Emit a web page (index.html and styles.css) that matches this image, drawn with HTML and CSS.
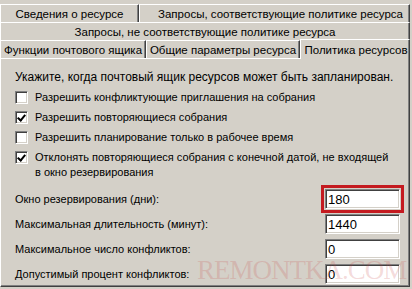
FILE: index.html
```html
<!DOCTYPE html>
<html lang="ru">
<head>
<meta charset="utf-8">
<title>Политика ресурсов</title>
<link rel="stylesheet" href="styles.css">
</head>
<body>
<div class="dialog">
  <div class="tab-remnant"></div>
  <div class="tab-row">
    <div class="tab tab-a">Сведения о ресурсе</div>
    <div class="tab tab-b">Запросы, соответствующие политике ресурса</div>
  </div>
  <div class="tab-row">
    <div class="tab tab-full">Запросы, не соответствующие политике ресурса</div>
  </div>
  <div class="tab-row tab-row-front">
    <div class="tab tab-c">Функции почтового ящика</div>
    <div class="tab tab-d">Общие параметры ресурса</div>
    <div class="tab tab-active">Политика ресурсов</div>
  </div>
  <div class="panel">
    <p class="intro">Укажите, когда почтовый ящик ресурсов может быть запланирован.</p>
    <div class="check-row"><span class="box"></span><span>Разрешить конфликтующие приглашения на собрания</span></div>
    <div class="check-row"><span class="box checked"></span><span>Разрешить повторяющиеся собрания</span></div>
    <div class="check-row"><span class="box"></span><span>Разрешить планирование только в рабочее время</span></div>
    <div class="check-row two-line"><span class="box checked"></span><span class="tight">Отклонять повторяющиеся собрания с конечной датой, не входящей<br>в окно резервирования</span></div>
    <div class="fields">
      <div class="field"><span>Окно резервирования (дни):</span><span class="input highlight">180</span></div>
      <div class="field"><span>Максимальная длительность (минут):</span><span class="input">1440</span></div>
      <div class="field"><span>Максимальное число конфликтов:</span><span class="input">0</span></div>
      <div class="field"><span>Допустимый процент конфликтов:</span><span class="input">0</span></div>
    </div>
    <div class="watermark">REMONTKA.COM</div>
  </div>
</div>
</body>
</html>
```
FILE: styles.css
```css
* { box-sizing: border-box; }
html, body { margin: 0; padding: 0; }
body {
  background: #d4d0c8;
  font-family: "Liberation Sans", Arial, sans-serif;
  font-size: 11px;
  color: #000;
  width: 412px;
  height: 289px;
  overflow: hidden;
}
.dialog {
  width: 410px;
  height: 287px;
  display: flex;
  flex-direction: column;
}
.tab-remnant {
  height: 4px;
}
.tab-row {
  display: flex;
  height: 18px;
}
.tab {
  display: flex;
  align-items: center;
  justify-content: center;
  white-space: nowrap;
  font-size: 11.5px;
  border-top: 1px solid #fff;
  border-left: 1px solid #fff;
  border-right: 1px solid #404040;
  box-shadow: inset -1px 0 0 #808080;
  height: 18px;
}
.tab-a { width: 139px; }
.tab-b { flex: 1; padding-left: 12px; }
.tab-full { flex: 1; }
.tab-c { width: 146px; }
.tab-d { width: 154px; }
.tab-active {
  flex: 1;
  height: 20px;
  margin-top: -1px;
  position: relative;
  z-index: 1;
  background: #d4d0c8;
  padding-left: 2px;
}
.panel {
  flex: 1;
  position: relative;
  border-top: 1px solid #fff;
  border-left: 1px solid #fff;
  border-right: 1px solid #404040;
  border-bottom: 1px solid #404040;
  box-shadow: inset -1px -1px 0 #808080;
  padding: 11px 0 0 14px;
}
.intro {
  margin: 0 0 3px;
  font-size: 12px;
  line-height: 15px;
}
.check-row {
  display: flex;
  align-items: flex-start;
  gap: 7px;
  height: 20px;
  line-height: 15px;
  padding-top: 2px;
}
.check-row.two-line { height: 41px; }
.tight { letter-spacing: 0; white-space: nowrap; }
.box {
  flex: none;
  width: 13px;
  height: 13px;
  margin-top: 1px;
  background: #fff;
  border-top: 1px solid #808080;
  border-left: 1px solid #808080;
  border-right: 1px solid #fff;
  border-bottom: 1px solid #fff;
  box-shadow: inset 1px 1px 0 #404040, inset -1px -1px 0 #d4d0c8;
  position: relative;
}
.box.checked::after {
  content: "";
  position: absolute;
  left: 2px;
  top: 1px;
  width: 3px;
  height: 6px;
  border-right: 2px solid #000;
  border-bottom: 2px solid #000;
  transform: translate(1px, 0) rotate(40deg);
}
.fields {
  display: flex;
  flex-direction: column;
  gap: 5px;
}
.field {
  display: flex;
  align-items: center;
  justify-content: space-between;
  height: 20px;
  padding-right: 9px;
}
.input {
  width: 75px;
  height: 20px;
  background: #fff;
  border-top: 1px solid #808080;
  border-left: 1px solid #808080;
  border-right: 1px solid #fff;
  border-bottom: 1px solid #fff;
  box-shadow: inset 1px 1px 0 #404040, inset -1px -1px 0 #d4d0c8;
  padding: 2px 2px;
  line-height: 15px;
  font-size: 13px;
}
.input.highlight {
  outline: 3px solid #c41a20;
  outline-offset: 1px;
}
.watermark {
  position: absolute;
  left: 196px;
  bottom: 2px;
  line-height: 28px;
  font-family: "Liberation Serif", "Times New Roman", serif;
  font-size: 27px;
  letter-spacing: -1px;
  color: rgba(200, 70, 70, 0.2);
  pointer-events: none;
  white-space: nowrap;
}
```
